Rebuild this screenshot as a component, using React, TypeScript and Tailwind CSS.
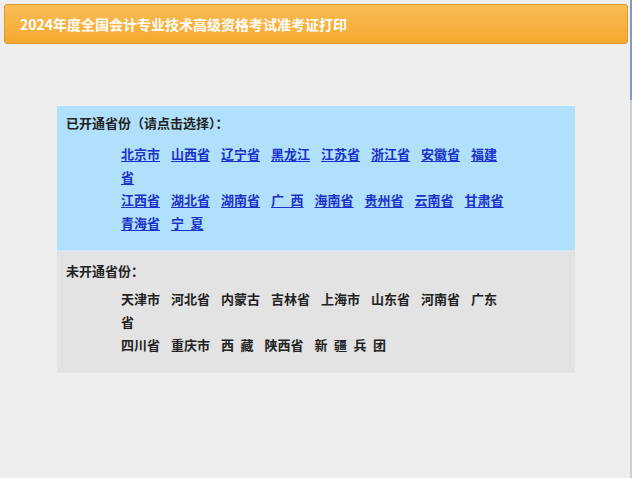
const openRows = [
  ['北京市', '山西省', '辽宁省', '黑龙江', '江苏省', '浙江省', '安徽省', '福建省'],
  ['江西省', '湖北省', '湖南省', '广 西', '海南省', '贵州省', '云南省', '甘肃省'],
  ['青海省', '宁 夏'],
];

const closedRows = [
  ['天津市', '河北省', '内蒙古', '吉林省', '上海市', '山东省', '河南省', '广东省'],
  ['四川省', '重庆市', '西 藏', '陕西省', '新 疆 兵 团'],
];

const font = { fontFamily: '"Noto Sans CJK SC", "Liberation Sans", sans-serif' };

// the page spaces out two-character names with a wide space
const spaced = (s: string) => s.replace(/ /g, '\u2002');

export default function App() {
  return (
    <div className="relative w-[632px] h-[478px] bg-[#eeeeee] overflow-hidden" style={font}>
      {/* right edge strip */}
      <div className="absolute right-0 top-0 w-[2px] h-[100px] bg-[#7d9dc0]" />
      <div className="absolute right-0 top-[100px] w-[2px] bottom-0 bg-[#cfcfcf]" />

      <div className="pt-[4px] px-[4px]">
        <div className="h-[40px] flex items-center pl-[15px] rounded-[3px] border border-[#e09a30] bg-gradient-to-b from-[#fabd55] to-[#f5a82e]">
          <h1 className="text-[14px] font-bold text-white leading-none">
            2024年度全国会计专业技术高级资格考试准考证打印
          </h1>
        </div>
      </div>

      <div className="ml-[57px] mt-[62px] w-[518px]">
        {/* opened */}
        <div className="bg-[#b0e0fb] pt-[6px] pb-[16px] pl-[9px] border-b border-[#c9ebfb]">
          <div className="text-[13px] font-bold text-[#222] leading-[22px]">
            已开通省份（请点击选择）：
          </div>
          <div className="mt-[8px] ml-[55px] w-[398px] text-[13px] font-bold leading-[23px]">
            {openRows.map((row, i) => (
              <div key={i}>
                {row.map((p) => (
                  <a key={p} href="#" className="mr-[11px] text-[#1a32c8] underline underline-offset-2">
                    {spaced(p)}
                  </a>
                ))}
              </div>
            ))}
          </div>
        </div>

        {/* not opened */}
        <div className="bg-[#e3e3e3] pt-[9px] pb-[17px] pl-[9px]">
          <div className="text-[13px] font-bold text-[#222] leading-[22px]">未开通省份：</div>
          <div className="mt-[5px] ml-[55px] w-[398px] text-[13px] font-bold text-[#222] leading-[23px]">
            {closedRows.map((row, i) => (
              <div key={i}>
                {row.map((p) => (
                  <span key={p} className="mr-[11px]">
                    {spaced(p)}
                  </span>
                ))}
              </div>
            ))}
          </div>
        </div>
      </div>
    </div>
  );
}
